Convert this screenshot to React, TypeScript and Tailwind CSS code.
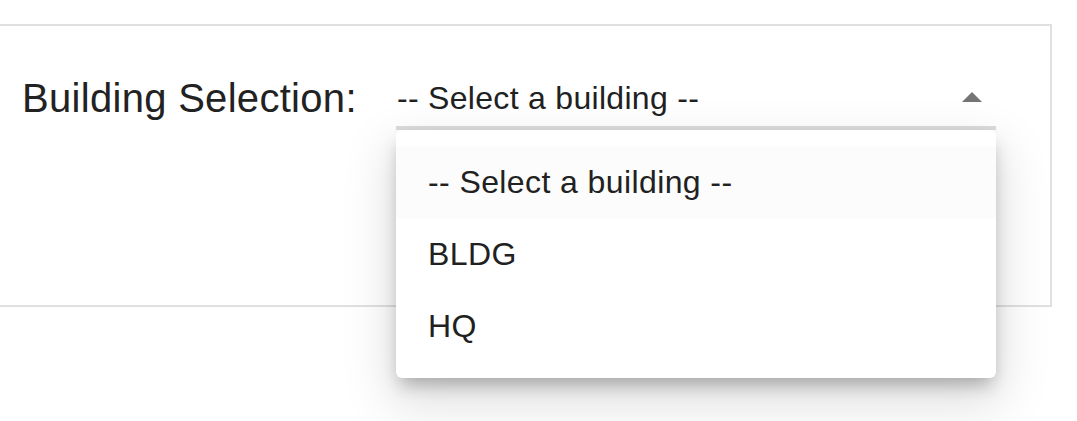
import React from 'react';

const options = ['-- Select a building --', 'BLDG', 'HQ'];

const BuildingSelect: React.FC = () => {
    return (
        <div className="relative mt-[5px] w-[600px]">
            {/* Select field */}
            <div className="relative border-b-4 border-[#dcdcdc] pb-[9px] pl-px">
                <span className="block text-[32px] leading-[37px] tracking-[0.3px] text-[#212121]">-- Select a building --</span>
                <svg className="absolute right-[14px] top-[12px] h-[10px] w-[20px]" viewBox="0 0 20 10">
                    <path d="M0 10 L10 0 L20 10 Z" fill="#757575" />
                </svg>
            </div>

            {/* Open menu */}
            <div className="absolute left-0 top-full z-10 w-[600px] rounded-[6px] bg-white py-4 shadow-[0_10px_18px_-4px_rgba(0,0,0,0.28),0_20px_50px_6px_rgba(0,0,0,0.13)]">
                {options.map((opt, i) => (
                    <div
                        key={opt}
                        className={`flex h-[72px] items-center px-8 text-[32px] leading-[37px] tracking-[0.4px] text-[#212121] ${i === 0 ? 'bg-[#fcfcfc]' : ''}`}
                    >
                        {opt}
                    </div>
                ))}
            </div>
        </div>
    );
};

export default function App() {
    return (
        <div className="min-h-screen bg-white pr-[25px] pt-[24px] font-['Liberation_Sans',Arial,sans-serif]">
            <div className="h-[283px] border-2 border-l-0 border-[#e0e0e0] bg-white">
                <div className="flex items-start pl-[22px] pt-[49px]">
                    <label className="w-[374px] shrink-0 text-[40px] leading-[46px] tracking-[0.3px] text-[#222]">
                        Building Selection:
                    </label>
                    <BuildingSelect />
                </div>
            </div>
        </div>
    );
}
